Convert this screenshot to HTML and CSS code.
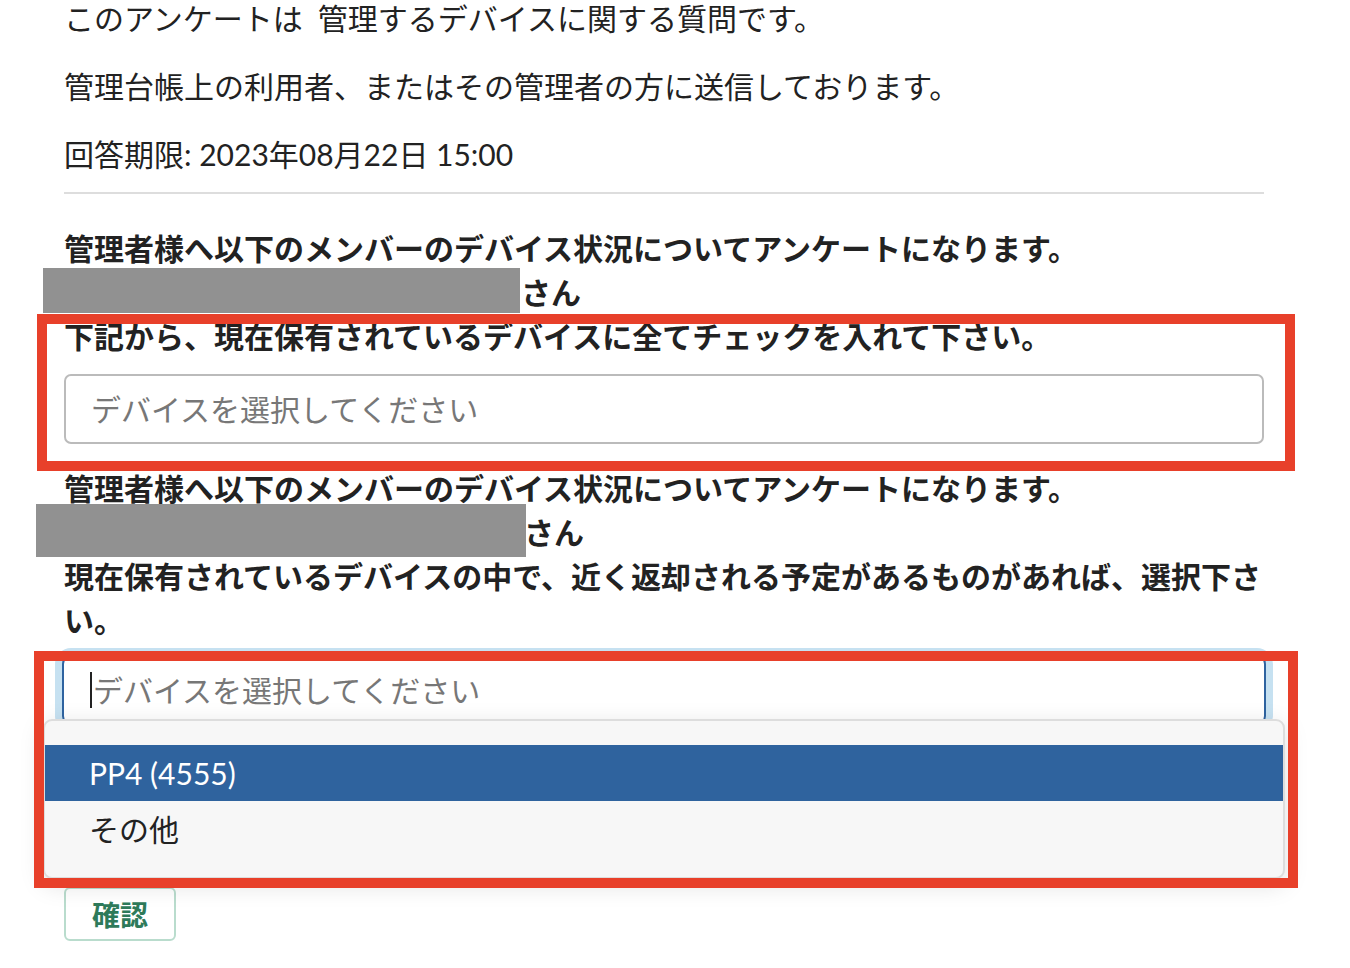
FILE: index.html
```html
<!DOCTYPE html>
<html lang="ja">
<head>
    <meta charset="UTF-8">
    <meta name="viewport" content="width=device-width, initial-scale=1.0">
    <title>デバイスアンケート</title>
<link rel="stylesheet" href="styles.css">
</head>
<body>
<div class="page">
    <div class="intro">
        <p>このアンケートは&ensp;管理するデバイスに関する質問です。</p>
        <p>管理台帳上の利用者、またはその管理者の方に送信しております。</p>
        <p>回答期限: 2023年08月22日 15:00</p>
    </div>
    <div class="divider"></div>

    <form class="survey" action="" method="get">
        <section class="question">
            <div class="q-text">
                <div>管理者様へ以下のメンバーのデバイス状況についてアンケートになります。</div>
                <div class="member member-1">さん</div>
                <div>下記から、現在保有されているデバイスに全てチェックを入れて下さい。</div>
            </div>
            <div class="picker">デバイスを選択してください</div>
        </section>

        <section class="question question-return">
            <div class="q-text">
                <div>管理者様へ以下のメンバーのデバイス状況についてアンケートになります。</div>
                <div class="member member-2">さん</div>
                <div>現在保有されているデバイスの中で、近く返却される予定があるものがあれば、選択下さい。</div>
            </div>
            <div class="picker is-focused"><span class="caret"></span>デバイスを選択してください</div>
            <ul class="dropdown">
                <li class="is-highlighted">PP4 (4555)</li>
                <li>その他</li>
            </ul>
        </section>

        <button type="button" class="btn-confirm">確認</button>
    </form>

    <!-- highlight frames -->
    <div class="mark mark-1"></div>
    <div class="mark mark-2"></div>
</div>
</body>
</html>
```

FILE: styles.css
```css
*{box-sizing: border-box;}
body{
    margin: 0;
    background-color: #fff;
    color: #222;
    font-family: Lato, "Noto Sans CJK JP", sans-serif;
    font-size: 30px;
    line-height: 44px;
}
.page{
    position: relative;
    display: flow-root;
    padding: 0 86px 0 64px;
    width: 1350px;
    height: 968px;
    overflow: hidden;
}

/* intro */
.intro p{
    margin: 0 0 24px;
}
.intro p:first-child{
    margin-top: -4px;
}
.intro p:last-child{
    margin-bottom: 16px;
}
.divider{
    border-top: 2px solid #dddddd;
    margin-bottom: 32px;
}

/* questions */
.q-text{
    font-weight: bold;
}
.question-return{
    margin-top: 22px;
}
.member{
    position: relative;
}
.member::before{
    content: "";
    position: absolute;
    background-color: #919191;
}
.member-1{ padding-left: 457px; }
.member-1::before{
    left: -21px;
    top: -2px;
    width: 477px;
    height: 45px;
}
.member-2{ padding-left: 460px; }
.member-2::before{
    left: -28px;
    top: -6px;
    width: 490px;
    height: 53px;
}

.picker{
    display: flex;
    align-items: center;
    height: 70px;
    margin-top: 16px;
    padding-left: 25px;
    border: 2px solid #bbbbbb;
    border-radius: 7px;
    color: #777;
    background-color: #fff;
}
.picker.is-focused{
    margin: 13px -2px 0;
    padding-left: 26px;
    border-color: #2e63a0;
    border-radius: 9px;
    box-shadow: 0 0 0 7px #c6e1f1;
}
.caret{
    display: inline-block;
    width: 2px;
    height: 36px;
    margin-right: 1px;
    background-color: #222;
}

.dropdown{
    position: relative;
    z-index: 1;
    list-style: none;
    margin: -6px -21px 0;
    padding: 24px 0 20px;
    background-color: #f7f7f7;
    border: 2px solid #dddddd;
    border-radius: 9px;
    box-shadow: 0 6px 24px rgba(0,0,0,0.13);
}
.dropdown li{
    height: 56px;
    line-height: 56px;
    padding-left: 44px;
    color: #222;
}
.dropdown li.is-highlighted{
    background-color: #2f639e;
    color: #fff;
}

.btn-confirm{
    display: block;
    margin-top: 8px;
    height: 54px;
    padding: 0 26px;
    background-color: #fff;
    border: 2px solid #b9dccd;
    border-radius: 6px;
    color: #2e7a5a;
    font-family: Lato, "Noto Sans CJK JP", sans-serif;
    font-size: 28px;
    font-weight: bold;
}

/* red frames drawn over the form */
.mark{
    position: absolute;
    z-index: 2;
    border: 10px solid #e8402a;
}
.mark-1{
    left: 37px;
    top: 314px;
    width: 1258px;
    height: 157px;
}
.mark-2{
    left: 34px;
    top: 651px;
    width: 1264px;
    height: 237px;
}
```
